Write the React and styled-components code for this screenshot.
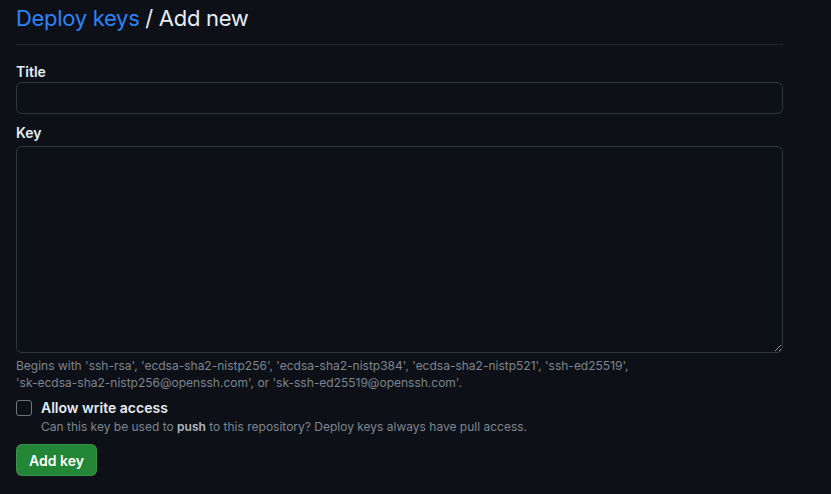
import React from 'react'
import styled, { createGlobalStyle } from 'styled-components'

const GlobalStyle = createGlobalStyle`
    html, body {
        margin: 0;
        padding: 0;
        background: #0d1117;
    }
    body {
        font-family: Inter, "Liberation Sans", sans-serif;
        color: #e6edf3;
    }
`

const keyTypes = [
    'ssh-rsa',
    'ecdsa-sha2-nistp256',
    'ecdsa-sha2-nistp384',
    'ecdsa-sha2-nistp521',
    'ssh-ed25519',
    'sk-ecdsa-sha2-nistp256@openssh.com',
]

const StyledPage = styled.main`
    width: 767px;
    padding: 0 16px;
    min-height: 494px;
    background: #0d1117;
`

const StyledHeader = styled.h2`
    margin: 0;
    padding-bottom: 8px;
    border-bottom: 1px solid #21262d;
    font-size: 22px;
    font-weight: 400;
    letter-spacing: -0.3px;
    line-height: 36px;
    color: #e6edf3;
`

const StyledCrumb = styled.a`
    color: #2f81f7;
    text-decoration: none;
`

const StyledForm = styled.form`
    display: flex;
    flex-direction: column;
    padding-top: 16px;
`

const StyledGroup = styled.div`
    display: flex;
    flex-direction: column;
    margin-top: ${(p) => p.$top || 0}px;
`

const StyledLabel = styled.label`
    font-size: 14px;
    font-weight: 600;
    line-height: 21px;
    margin-bottom: ${(p) => p.$gap || 0}px;
`

const StyledInput = styled.input`
    box-sizing: border-box;
    height: 32px;
    width: 100%;
    padding: 5px 12px;
    background: #0d1117;
    border: 1px solid #30363d;
    border-radius: 6px;
    color: #e6edf3;
    font: inherit;
    font-size: 14px;
    outline: none;
`

const StyledTextarea = styled.textarea`
    box-sizing: border-box;
    height: 207px;
    width: 100%;
    padding: 8px 12px;
    background: #0d1117;
    border: 1px solid #30363d;
    border-radius: 6px;
    color: #e6edf3;
    font: inherit;
    font-size: 14px;
    outline: none;
    resize: vertical;
    display: block;
`

const StyledNote = styled.p`
    margin: 4px 0 0;
    font-size: 12px;
    line-height: 17px;
    color: #7d8590;
`

const StyledKeyType = styled.span`
    white-space: nowrap;
`

const StyledCheckRow = styled.div`
    display: flex;
    align-items: flex-start;
    gap: 9px;
    margin-top: 6px;
`

const StyledCheckbox = styled.span`
    box-sizing: border-box;
    flex: none;
    width: 16px;
    height: 16px;
    margin-top: 3px;
    border: 1px solid #6e7681;
    border-radius: 3px;
    background: #0d1117;
`

const StyledCheckText = styled.div`
    display: flex;
    flex-direction: column;
`

const StyledCheckLabel = styled.span`
    font-size: 14px;
    font-weight: 600;
    line-height: 21px;
`

const StyledCheckNote = styled.span`
    font-size: 12px;
    line-height: 17px;
    color: #7d8590;

    strong {
        color: #adbac7;
        font-weight: 600;
    }
`

const StyledButton = styled.button`
    align-self: flex-start;
    margin-top: 9px;
    height: 32px;
    padding: 0 12px;
    background: #238636;
    border: 1px solid rgba(240, 246, 252, 0.1);
    border-radius: 6px;
    color: #ffffff;
    font: inherit;
    font-size: 14px;
    font-weight: 600;
    cursor: pointer;
`

export default function App() {
    return (
        <StyledPage>
            <GlobalStyle />
            <StyledHeader>
                <StyledCrumb href="#">Deploy keys</StyledCrumb> / Add new
            </StyledHeader>
            <StyledForm onSubmit={(e) => e.preventDefault()}>
                <StyledGroup>
                    <StyledLabel htmlFor="title">Title</StyledLabel>
                    <StyledInput id="title" type="text" />
                </StyledGroup>
                <StyledGroup $top={8}>
                    <StyledLabel htmlFor="key" $gap={3}>
                        Key
                    </StyledLabel>
                    <StyledTextarea id="key" />
                    <StyledNote>
                        Begins with{' '}
                        {keyTypes.map((t) => (
                            <React.Fragment key={t}>
                                <StyledKeyType>'{t}',</StyledKeyType>{' '}
                            </React.Fragment>
                        ))}
                        or <StyledKeyType>'sk-ssh-ed25519@openssh.com'.</StyledKeyType>
                    </StyledNote>
                </StyledGroup>
                <StyledCheckRow>
                    <StyledCheckbox />
                    <StyledCheckText>
                        <StyledCheckLabel>Allow write access</StyledCheckLabel>
                        <StyledCheckNote>
                            Can this key be used to <strong>push</strong> to this
                            repository? Deploy keys always have pull access.
                        </StyledCheckNote>
                    </StyledCheckText>
                </StyledCheckRow>
                <StyledButton type="submit">Add key</StyledButton>
            </StyledForm>
        </StyledPage>
    )
}
